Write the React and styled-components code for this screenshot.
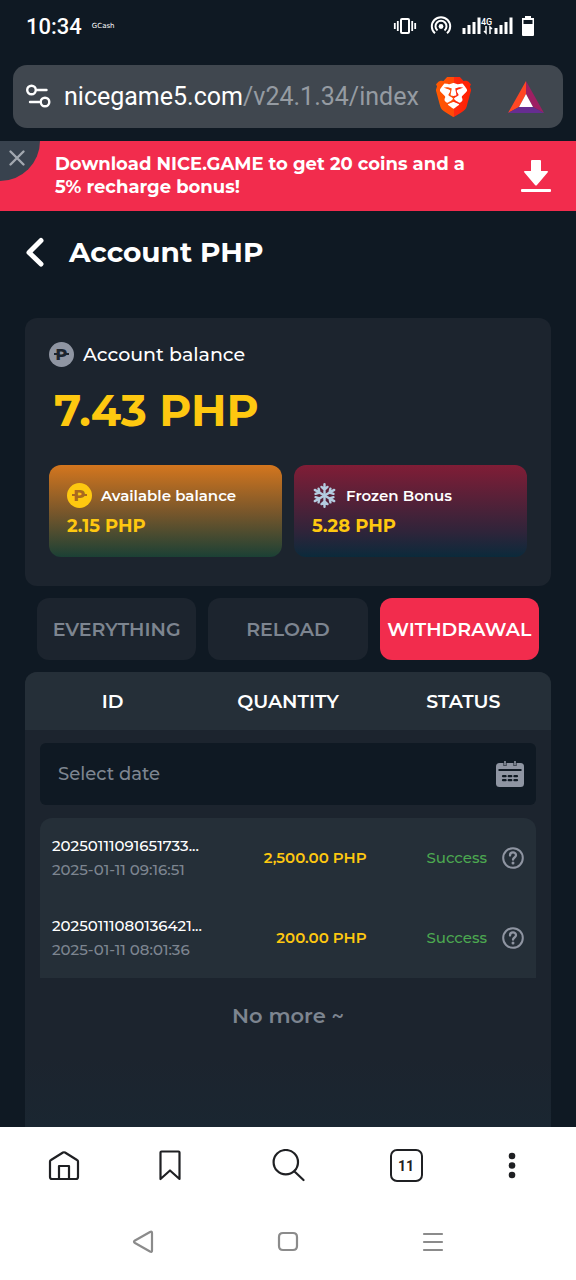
import React, { useState } from "react";
import styled, { createGlobalStyle, ThemeProvider } from "styled-components";

const theme = {
  page: "#0f1923",
  card: "#1c242e",
  raised: "#252f38",
  red: "#f22c4d",
  yellow: "#fec810",
  grey: "#7d8590",
  icon: "#8f95a2",
  green: "#4ca850",
};

const GlobalStyle = createGlobalStyle`
  * {
    box-sizing: border-box;
  }
  body {
    margin: 0;
    background: ${theme.page};
    color: #fff;
    font-family: Montserrat, Inter, "Noto Sans", sans-serif;
  }
  button {
    border: 0;
    padding: 0;
    background: none;
    color: inherit;
    font: inherit;
    cursor: pointer;
  }
  svg {
    display: block;
    flex: none;
  }
`;

const Screen = styled.div`
  display: flex;
  flex-direction: column;
  min-height: 100vh;
`;

const StatusBar = styled.header`
  display: flex;
  align-items: center;
  height: 65px;
  padding: 0 40px 13px 26px;
  font-family: Roboto, sans-serif;
`;

const Clock = styled.span`
  font-size: 22px;
  font-weight: 500;
`;

const Carrier = styled.span`
  flex: 1;
  margin-left: 10px;
  font-family: "DejaVu Sans", sans-serif;
  font-size: 7px;
`;

const AddressBar = styled.div`
  display: flex;
  align-items: center;
  height: 63px;
  margin: 0 13px 13px;
  padding: 0 19px 0 12px;
  border-radius: 14px;
  background: #40474f;
`;

const Url = styled.span`
  flex: 1;
  min-width: 0;
  margin: 0 16px 0 12px;
  overflow: hidden;
  white-space: nowrap;
  font-family: Roboto, sans-serif;
  font-size: 25px;
  span {
    color: #959ba2;
  }
`;

const Shields = styled.button`
  margin-right: 37px;
`;

const Banner = styled.aside`
  position: relative;
  display: flex;
  align-items: center;
  justify-content: space-between;
  min-height: 70px;
  padding: 0 25px 0 55px;
  background: ${({ theme }) => theme.red};
  p {
    max-width: 430px;
    margin: 0;
    font-size: 18px;
    font-weight: 700;
    line-height: 23px;
  }
`;

const CloseButton = styled.button`
  position: absolute;
  top: 0;
  left: 0;
  width: 40px;
  height: 40px;
  padding: 0 0 6px 8px;
  border-radius: 0 0 40px 0;
  background: #38424e;
  color: #a2a8b0;
`;

const TitleBar = styled.div`
  display: flex;
  align-items: center;
  gap: 24px;
  height: 82px;
  padding: 0 25px;
  h1 {
    margin: 0;
    font-size: 28px;
    font-weight: 700;
  }
`;

const Main = styled.main`
  flex: 1;
  display: flex;
  flex-direction: column;
  padding: 25px 25px 0;
`;

const BalanceCard = styled.section`
  padding: 24px 24px 29px;
  border-radius: 12px;
  background: ${({ theme }) => theme.card};
`;

const BalanceLabel = styled.h2`
  display: flex;
  align-items: center;
  gap: 9px;
  height: 24px;
  margin: 0;
  font-size: ${({ $small }) => ($small ? 15 : 19)}px;
  font-weight: ${({ $small }) => ($small ? 600 : 500)};
`;

const Coin = styled.span`
  position: relative;
  display: grid;
  place-items: center;
  width: 25px;
  height: 25px;
  border-radius: 50%;
  background: ${({ $color }) => $color};
  color: ${({ $ink }) => $ink};
  font-size: 16px;
  font-weight: 800;
  line-height: 25px;
  &::after {
    content: "";
    position: absolute;
    top: 11px;
    left: 5px;
    box-sizing: border-box;
    width: 15px;
    height: 2px;
    border: solid;
    border-width: 0 3px;
  }
`;

const Total = styled.p`
  margin: 16px 5px 27px;
  color: ${({ theme }) => theme.yellow};
  font-size: 44px;
  font-weight: 700;
  line-height: 56px;
`;

const Wallets = styled.div`
  display: grid;
  grid-template-columns: 1fr 1fr;
  gap: 12px;
`;

const Wallet = styled.div`
  padding: 18px;
  border-radius: 12px;
  background: ${({ $frozen }) =>
    $frozen
      ? "linear-gradient(#801d36, #30243a 72%, #0b2a3b)"
      : "linear-gradient(#d4761e, #77562b 52%, #1b4035)"};
  p {
    margin: 6px 0 0;
    color: ${({ theme }) => theme.yellow};
    font-size: 18px;
    font-weight: 700;
    line-height: 26px;
  }
`;

const Tabs = styled.div`
  display: grid;
  grid-template-columns: repeat(3, 1fr);
  gap: 12px;
  padding: 12px;
`;

const Tab = styled.button`
  height: 62px;
  border-radius: 12px;
  background: ${({ theme, $active }) => ($active ? theme.red : theme.card)};
  color: ${({ theme, $active }) => ($active ? "#fff" : theme.grey)};
  font-size: 19px;
  font-weight: 600;
`;

const Records = styled.table`
  flex: 1;
  display: flex;
  flex-direction: column;
  overflow: hidden;
  border-radius: 12px 12px 0 0;
  background: linear-gradient(${({ theme }) => theme.card} 85%, #1a2631);
  thead,
  tbody {
    display: block;
  }
  tbody {
    margin: 0 15px;
  }
  th,
  td {
    padding: 0;
  }
`;

const HeadRow = styled.tr`
  display: grid;
  grid-template-columns: repeat(3, 1fr);
  align-items: center;
  height: 58px;
  background: ${({ theme }) => theme.raised};
  font-size: 19px;
  th {
    font-weight: 600;
  }
`;

const FilterRow = styled.tr`
  display: block;
  padding: 13px 0;
  td {
    display: block;
  }
`;

const DateField = styled.label`
  display: flex;
  align-items: center;
  height: 62px;
  padding: 0 12px 0 18px;
  border-radius: 6px;
  background: ${({ theme }) => theme.page};
  input {
    flex: 1;
    min-width: 0;
    padding: 0;
    border: 0;
    outline: 0;
    background: none;
    color: #fff;
    font: 500 18px Montserrat, Inter, sans-serif;
  }
  input::placeholder {
    color: ${({ theme }) => theme.grey};
    opacity: 1;
  }
`;

const RecordRow = styled.tr`
  display: grid;
  grid-template-columns: repeat(3, 1fr);
  align-items: center;
  height: 80px;
  padding: 0 12px;
  border-radius: ${({ $first }) => ($first ? "12px 12px 0 0" : "0")};
  background: ${({ theme }) => theme.raised};
  font-size: 15px;
  font-weight: 500;
  line-height: 24px;
  white-space: nowrap;
  time {
    display: block;
    color: ${({ theme }) => theme.grey};
  }
`;

const Amount = styled.td`
  color: ${({ theme }) => theme.yellow};
  font-weight: 600;
  text-align: right;
`;

const Status = styled.td`
  display: flex;
  align-items: center;
  justify-content: flex-end;
  gap: 15px;
  color: ${({ theme }) => theme.green};
  button {
    color: ${({ theme }) => theme.icon};
  }
`;

const EndRow = styled.tr`
  display: block;
  padding-top: 26px;
  color: ${({ theme }) => theme.grey};
  font-size: 21px;
  font-weight: 600;
  line-height: 24px;
  text-align: center;
  td {
    display: block;
  }
`;

const BrowserNav = styled.nav`
  display: grid;
  grid-template-columns: 106fr 106fr 130fr 106fr 106fr;
  place-items: center;
  height: 77px;
  padding: 0 11px;
  background: #fff;
  color: #1f2023;
`;

const TabCount = styled.button`
  width: 33px;
  height: 33px;
  border: 2px solid;
  border-radius: 7px;
  font-family: Roboto, sans-serif;
  font-size: 14px;
  font-weight: 700;
`;

const SystemNav = styled.nav`
  display: grid;
  grid-template-columns: repeat(3, 1fr);
  place-items: center;
  height: 76px;
  padding: 0 71px;
  background: #fff;
  color: #8b8b8b;
`;

const StatusIcons = () => (
  <svg width="144" height="24" viewBox="0 0 144 24" fill="none" stroke="#fff">
    <rect x="9" y="5" width="8" height="14" rx="1" strokeWidth="2" />
    <path d="M5.800 7v10M2.800 9v6M20.200 7v10M23.200 9v6" strokeWidth="1.8" />
    <circle cx="49" cy="12.500" r="2.400" fill="#fff" stroke="none" />
    <path d="M45.500 16.500A5.500 5.500 0 1 1 52.500 16.500M43 19.300a9.200 9.200 0 1 1 12 0" strokeWidth="2" />
    <path d="M72 20v-6M77 20v-9M82 20v-12M87 20V3.500M104 20v-6M109 20v-9M114 20v-12M119 20V3.500" strokeWidth="3" />
    <text x="89" y="11" fill="#fff" stroke="none" fontFamily="Roboto" fontSize="9" fontWeight="500">
      4G
    </text>
    <path d="M94 12v7l-2-2M98 20v-7l2 2" strokeWidth="1.500" />
    <path d="M130 4h3V2h6v2h3v17a1 1 0 0 1-1 1h-10a1 1 0 0 1-1-1z" fill="#fff" stroke="none" />
    <path d="M131.500 6h9v4h-9z" fill="#0f1923" stroke="none" />
  </svg>
);

const SiteSettingsIcon = () => (
  <svg width="27" height="26" viewBox="0 0 27 26" fill="none" stroke="#fff" strokeWidth="2.400" strokeLinecap="round">
    <circle cx="6.500" cy="6" r="4.300" />
    <path d="M12 6h9.500M5 18h9" />
    <circle cx="20" cy="18" r="4.300" />
  </svg>
);

const LionIcon = () => (
  <svg width="35" height="40" viewBox="1.900 0 20.200 24" preserveAspectRatio="none">
    <defs>
      <linearGradient id="lion" x1="0" x2="1">
        <stop offset="0" stopColor="#ff5a00" />
        <stop offset="0.500" stopColor="#ff4a08" />
        <stop offset="0.520" stopColor="#ff2a10" />
        <stop offset="1" stopColor="#ff2000" />
      </linearGradient>
    </defs>
    <path d="M4 3.500h16v8l-4 8h-8l-4-8z" fill="#fff" />
    <path
      fill="url(#lion)"
      d="M15.68 0l2.096 2.38s1.84-.512 2.709.358c.868.87 1.584 1.638 1.584 1.638l-.562 1.381.715 2.047s-2.104 7.98-2.35 8.955c-.486 1.919-.818 2.66-2.198 3.633-1.38.972-3.884 2.66-4.293 2.916-.409.256-.92.692-1.38.692-.46 0-.97-.436-1.38-.692a185.796 185.796 0 01-4.293-2.916c-1.38-.973-1.712-1.714-2.197-3.633-.247-.975-2.351-8.955-2.351-8.955l.715-2.047-.562-1.381s.716-.768 1.585-1.638c.868-.87 2.708-.358 2.708-.358L8.321 0h7.36zm-3.679 14.936c-.14 0-1.038.317-1.758.69-.72.373-1.242.637-1.409.742-.167.104-.065.301.087.409.152.107 2.194 1.69 2.393 1.866.198.175.489.464.687.464.198 0 .49-.29.688-.464.198-.175 2.24-1.759 2.392-1.866.152-.108.254-.305.087-.41-.167-.104-.689-.368-1.41-.741-.72-.373-1.617-.69-1.757-.69zm0-11.278s-.409.001-1.022.206-1.278.46-1.584.46c-.307 0-2.581-.434-2.581-.434S4.119 7.152 4.119 7.849c0 .697.339.881.68 1.243l2.02 2.149c.192.203.59.511.356 1.066-.235.555-.58 1.26-.196 1.977.384.716 1.042 1.194 1.464 1.115.421-.08 1.412-.598 1.776-.834.364-.237 1.518-1.19 1.518-1.554 0-.365-1.193-1.02-1.413-1.168-.22-.15-1.226-.725-1.247-.95-.02-.227-.012-.293.284-.851.297-.559.831-1.304.742-1.8-.089-.495-.95-.753-1.565-.986-.615-.232-1.799-.671-1.947-.74-.148-.068-.11-.133.339-.175.448-.043 1.719-.212 2.292-.052.573.16 1.552.403 1.632.532.079.13.149.134.067.579-.081.445-.5 2.581-.541 2.96-.04.38-.12.63.288.724.409.094 1.097.256 1.333.256s.924-.162 1.333-.256c.408-.093.329-.344.288-.723-.04-.38-.46-2.516-.541-2.961-.082-.445-.012-.45.067-.579.08-.129 1.059-.372 1.632-.532.573-.16 1.845.009 2.292.052.449.042.487.107.339.175-.148.069-1.332.508-1.947.74-.615.233-1.476.49-1.565.986-.09.496.445 1.241.742 1.8.297.558.304.624.284.85-.02.226-1.026.802-1.247.95-.22.15-1.413.804-1.413 1.169 0 .364 1.154 1.317 1.518 1.554.364.236 1.355.755 1.776.834.422.079 1.08-.4 1.464-1.115.384-.716.039-1.422-.195-1.977-.235-.555.163-.863.355-1.066l2.02-2.149c.341-.362.68-.546.68-1.243 0-.697-2.695-3.96-2.695-3.96s-2.274.436-2.58.436c-.307 0-.972-.256-1.585-.461-.613-.205-1.022-.206-1.022-.206z"
    />
  </svg>
);

const RewardsIcon = () => (
  <svg width="36" height="32" viewBox="0 0 36 32">
    <path d="M18 0L0 32l11-6 7-13z" fill="#ff4724" />
    <path d="M18 0l18 32-11-6-7-13z" fill="#9e1f63" />
    <path d="M0 32h36l-11-6H11z" fill="#662d91" />
    <path d="M18 13l7 13H11z" fill="#fff" />
  </svg>
);

const CloseIcon = () => (
  <svg width="18" height="18" viewBox="0 0 18 18" stroke="currentColor" strokeWidth="2.400" strokeLinecap="round">
    <path d="M2.500 2.500l13 13M15.500 2.500l-13 13" />
  </svg>
);

const DownloadIcon = () => (
  <svg width="30" height="32" viewBox="0 0 30 32" fill="#fff">
    <path d="M11 0h8q1 0 1 1v10h6q2 0 .6 1.500L16 25q-1 1-2 0L3.400 12.500Q2 11 4 11h6V1q0-1 1-1z" />
    <rect y="29" width="30" height="3" rx="1" />
  </svg>
);

const BackIcon = () => (
  <svg width="20" height="30" viewBox="0 0 20 30" fill="none" stroke="#fff" strokeWidth="5" strokeLinecap="round" strokeLinejoin="round">
    <path d="M16 3.500L4 15.500l12 11.500" />
  </svg>
);

const SnowflakeIcon = () => (
  <svg width="25" height="25" viewBox="-12.500 -12.500 25 25" fill="none" stroke="#b4cce0" strokeWidth="2.400" strokeLinecap="round">
    {[0, 60, 120, 180, 240, 300].map((angle) => (
      <path
        key={angle}
        transform={`rotate(${angle})`}
        d="M0 0v-11.200M0-5.800l-3-2.800M0-5.800l3-2.800"
      />
    ))}
  </svg>
);

const CalendarIcon = () => (
  <svg width="28" height="27" viewBox="0 0 28 27">
    <rect y="2" width="28" height="24" rx="3.500" fill="#8f95a2" />
    <path d="M7.500 0h3v5h-3zM17.500 0h3v5h-3z" fill="#0f1923" />
    <path d="M9 0v4.500M19 0v4.500" stroke="#8f95a2" strokeWidth="1.600" />
    <path d="M2.500 9h23" stroke="#0f1923" strokeWidth="2" />
    <path
      d="M7 15.200h2.600M12.700 15.200h2.600M18.400 15.200H21M7 19.200h2.600M12.700 19.200h2.600M18.400 19.200H21"
      stroke="#0f1923"
      strokeWidth="2.200"
      strokeLinecap="round"
    />
  </svg>
);

const HelpIcon = () => (
  <svg width="22" height="22" viewBox="0 0 22 22" fill="none" stroke="currentColor" strokeWidth="2" strokeLinecap="round">
    <circle cx="11" cy="11" r="9.800" />
    <path d="M8 8.500c0-4 6-4 6-.2 0 2.200-3 2.200-3 4.400" strokeWidth="2.300" />
    <circle cx="11" cy="16" r="1.500" fill="currentColor" stroke="none" />
  </svg>
);

const NavIcon = ({ d, width = 34 }) => (
  <svg width={width} height="34" viewBox={`0 0 ${width} 34`} fill="none" stroke="currentColor" strokeWidth="2.200" strokeLinecap="round" strokeLinejoin="round">
    <path d={d} />
  </svg>
);

const records = [
  { id: "20250111091651733...", time: "2025-01-11 09:16:51", amount: "2,500.00 PHP" },
  { id: "20250111080136421...", time: "2025-01-11 08:01:36", amount: "200.00 PHP" },
];

const tabs = ["EVERYTHING", "RELOAD", "WITHDRAWAL"];

const App = () => {
  const [activeTab, setActiveTab] = useState("WITHDRAWAL");

  return (
    <ThemeProvider theme={theme}>
      <GlobalStyle />
      <Screen>
        <StatusBar>
          <Clock>10:34</Clock>
          <Carrier>GCash</Carrier>
          <StatusIcons />
        </StatusBar>
        <AddressBar>
          <SiteSettingsIcon />
          <Url>
            nicegame5.com<span>/v24.1.34/index</span>
          </Url>
          <Shields aria-label="Shields">
            <LionIcon />
          </Shields>
          <button aria-label="Rewards">
            <RewardsIcon />
          </button>
        </AddressBar>
        <Banner>
          <CloseButton aria-label="Close">
            <CloseIcon />
          </CloseButton>
          <p>Download NICE.GAME to get 20 coins and a 5% recharge bonus!</p>
          <button aria-label="Download">
            <DownloadIcon />
          </button>
        </Banner>
        <TitleBar>
          <button aria-label="Back">
            <BackIcon />
          </button>
          <h1>Account PHP</h1>
        </TitleBar>
        <Main>
          <BalanceCard>
            <BalanceLabel>
              <Coin $color={theme.icon} $ink={theme.card}>P</Coin>
              Account balance
            </BalanceLabel>
            <Total>7.43 PHP</Total>
            <Wallets>
              <Wallet>
                <BalanceLabel as="h3" $small>
                  <Coin $color={theme.yellow} $ink="#a9691f">P</Coin>
                  Available balance
                </BalanceLabel>
                <p>2.15 PHP</p>
              </Wallet>
              <Wallet $frozen>
                <BalanceLabel as="h3" $small>
                  <SnowflakeIcon />
                  Frozen Bonus
                </BalanceLabel>
                <p>5.28 PHP</p>
              </Wallet>
            </Wallets>
          </BalanceCard>
          <Tabs>
            {tabs.map((tab) => (
              <Tab
                key={tab}
                $active={tab === activeTab}
                aria-pressed={tab === activeTab}
                onClick={() => setActiveTab(tab)}
              >
                {tab}
              </Tab>
            ))}
          </Tabs>
          <Records>
            <thead>
              <HeadRow>
                <th>ID</th>
                <th>QUANTITY</th>
                <th>STATUS</th>
              </HeadRow>
            </thead>
            <tbody>
              <FilterRow>
                <td colSpan={3}>
                  <DateField>
                    <input type="text" placeholder="Select date" aria-label="Select date" />
                    <CalendarIcon />
                  </DateField>
                </td>
              </FilterRow>
              {records.map((record, index) => (
                <RecordRow key={record.id} $first={index === 0}>
                  <td>
                    {record.id}
                    <time>{record.time}</time>
                  </td>
                  <Amount>{record.amount}</Amount>
                  <Status>
                    Success
                    <button aria-label="Help">
                      <HelpIcon />
                    </button>
                  </Status>
                </RecordRow>
              ))}
              <EndRow>
                <td colSpan={3}>No more ~</td>
              </EndRow>
            </tbody>
          </Records>
        </Main>
        <BrowserNav aria-label="Browser">
          <button aria-label="Home">
            <NavIcon d="M3 12.500Q3 11.500 4 11L16 3.500Q17 3 18 3.500L30 11q1 .5 1 1.500V28q0 2-2 2H5q-2 0-2-2zM12 30V17h10v13" />
          </button>
          <button aria-label="Bookmarks">
            <NavIcon width={24} d="M2.500 3.500q0-1 1-1h17q1 0 1 1v26.500L12 21.500l-9.500 8.500z" />
          </button>
          <button aria-label="Search">
            <NavIcon d="M27 13.200a12.200 12.200 0 1 1-24.400 0 12.200 12.200 0 0 1 24.400 0zM23.500 22.500L32.500 31" />
          </button>
          <TabCount aria-label="11 tabs">11</TabCount>
          <button aria-label="Menu">
            <svg width="8" height="28" viewBox="0 0 8 28" fill="currentColor">
              <circle cx="4" cy="4" r="3.300" />
              <circle cx="4" cy="13.500" r="3.300" />
              <circle cx="4" cy="23" r="3.300" />
            </svg>
          </button>
        </BrowserNav>
        <SystemNav aria-label="System">
          <button aria-label="Back">
            <NavIcon width={22} d="M3 15.500L18 7q2-1 2 1v17.500q0 2-2 1L3 18q-2-1.200 0-2.500z" />
          </button>
          <button aria-label="Home screen">
            <NavIcon width={22} d="M6 8h10q4 0 4 4v9q0 4-4 4H6q-4 0-4-4v-9q0-4 4-4z" />
          </button>
          <button aria-label="Recent apps">
            <NavIcon width={22} d="M2 9h18M2 17h18M2 25h18" />
          </button>
        </SystemNav>
      </Screen>
    </ThemeProvider>
  );
};

export default App;
